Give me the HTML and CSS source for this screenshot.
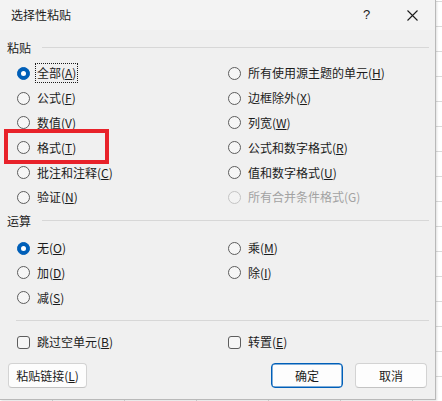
FILE: index.html
```html
<!DOCTYPE html>
<html lang="zh-CN">
<head>
<meta charset="utf-8">
<title>选择性粘贴</title>
<link rel="stylesheet" href="styles.css">
</head>
<body>
<div class="screen">
  <div class="dialog">
    <div class="titlebar">
      <span class="title">选择性粘贴</span>
      <span class="help">?</span>
      <span class="close"><svg width="11" height="11" viewBox="0 0 11 11"><path d="M0.5 0.5 L10.5 10.5 M10.5 0.5 L0.5 10.5" stroke="#1b1b1b" stroke-width="1.1" fill="none"/></svg></span>
    </div>
    <div class="body">
      <div class="section-head"><span class="head-label">粘贴</span><span class="rule"></span></div>
      <div class="opts paste">
        <label class="opt checked"><span class="radio"></span><span class="text focus">全部(<u>A</u>)</span></label>
        <label class="opt"><span class="radio"></span><span class="text">公式(<u>F</u>)</span></label>
        <label class="opt"><span class="radio"></span><span class="text">数值(<u>V</u>)</span></label>
        <label class="opt"><span class="radio"></span><span class="text">格式(<u>T</u>)</span></label>
        <label class="opt"><span class="radio"></span><span class="text">批注和注释(<u>C</u>)</span></label>
        <label class="opt"><span class="radio"></span><span class="text">验证(<u>N</u>)</span></label>
        <label class="opt"><span class="radio"></span><span class="text">所有使用源主题的单元(<u>H</u>)</span></label>
        <label class="opt"><span class="radio"></span><span class="text">边框除外(<u>X</u>)</span></label>
        <label class="opt"><span class="radio"></span><span class="text">列宽(<u>W</u>)</span></label>
        <label class="opt"><span class="radio"></span><span class="text">公式和数字格式(<u>R</u>)</span></label>
        <label class="opt"><span class="radio"></span><span class="text">值和数字格式(<u>U</u>)</span></label>
        <label class="opt disabled"><span class="radio"></span><span class="text">所有合并条件格式(G)</span></label>
      </div>
      <div class="section-head ops-head"><span class="head-label">运算</span><span class="rule"></span></div>
      <div class="opts ops">
        <label class="opt checked"><span class="radio"></span><span class="text">无(<u>O</u>)</span></label>
        <label class="opt"><span class="radio"></span><span class="text">加(<u>D</u>)</span></label>
        <label class="opt"><span class="radio"></span><span class="text">减(<u>S</u>)</span></label>
        <label class="opt"><span class="radio"></span><span class="text">乘(<u>M</u>)</span></label>
        <label class="opt"><span class="radio"></span><span class="text">除(<u>I</u>)</span></label>
      </div>
      <div class="sep"></div>
      <div class="checks">
        <label class="opt"><span class="checkbox"></span><span class="text">跳过空单元(<u>B</u>)</span></label>
        <label class="opt"><span class="checkbox"></span><span class="text">转置(<u>E</u>)</span></label>
      </div>
      <div class="buttons">
        <button class="btn link">粘贴链接(<u>L</u>)</button>
        <span class="spacer"></span>
        <button class="btn primary">确定</button>
        <button class="btn">取消</button>
      </div>
    </div>
  </div>
  <div class="annot"></div>
</div>
</body>
</html>
```
FILE: styles.css
```css
* { box-sizing: border-box; }
html, body { margin: 0; padding: 0; }
body {
  width: 442px;
  height: 401px;
  overflow: hidden;
  font-family: "Microsoft YaHei UI", "Noto Sans CJK SC", "Noto Sans", sans-serif;
  font-size: 12px;
  color: #1b1b1b;
  background-color: #ffffff;
  background-image:
    repeating-linear-gradient(to right, transparent 0 52px, #dadada 52px 53px, transparent 53px 72px),
    repeating-linear-gradient(to bottom, transparent 0 1px, #dadada 1px 2px, transparent 2px 25px);
  background-position: 0 0, 0 0;
}
.screen {
  position: relative;
  width: 442px;
  height: 401px;
}
.dialog {
  width: 436px;
  height: 400px;
  background: #f0f0f0;
  border-right: 1px solid #b9b9b9;
  border-bottom: 1px solid #b9b9b9;
  display: flex;
  flex-direction: column;
  box-shadow: 1px 1px 2px rgba(0,0,0,0.12);
}
.titlebar {
  height: 30px;
  display: flex;
  align-items: center;
  background: #f3f3f3;
  padding-left: 11px;
  flex: none;
}
.title { flex: 1; line-height: 16px; }
.help {
  width: 45px;
  text-align: center;
  font-family: "Liberation Sans", "Noto Sans", sans-serif;
  font-size: 13px;
  line-height: 16px;
}
.close {
  width: 46px;
  display: flex;
  justify-content: center;
  align-items: center;
}
.close svg { display: block; }
.body {
  flex: 1;
  padding: 8px 6px 10px 7px;
  display: flex;
  flex-direction: column;
}
.section-head {
  height: 20px;
  display: flex;
  align-items: center;
  flex: none;
}
.head-label { line-height: 16px; width: 35px; }
.rule {
  flex: 1;
  height: 1px;
  background: #d7d7d7;
  margin-top: -1px;
}
.opts {
  display: grid;
  grid-template-columns: 211px auto;
  grid-auto-flow: column;
  margin-left: 10px;
}
.paste {
  grid-template-rows: repeat(6, 24.8px);
  margin-top: 3px;
}
.ops-head { margin-top: 1px; }
.ops {
  grid-template-rows: repeat(3, 24.8px);
  margin-top: 5px;
}
.opt {
  display: flex;
  align-items: center;
  white-space: nowrap;
}
.radio {
  width: 13px;
  height: 13px;
  border-radius: 50%;
  border: 1px solid #5d5d5d;
  background: #f6f6f6;
  flex: none;
  margin-right: 5px;
  position: relative;
}
.checked .radio {
  border-color: #005fb8;
  background: #005fb8;
}
.checked .radio::after {
  content: "";
  position: absolute;
  left: 3px;
  top: 3px;
  width: 5px;
  height: 5px;
  border-radius: 50%;
  background: #ffffff;
}
.text {
  line-height: 16px;
  padding: 1px;
  border: 1px dotted transparent;
}
.text.focus { border-color: #1b1b1b; padding: 1px 1px 1px 1px; }
u { text-decoration-thickness: 1px; text-underline-offset: 1px; }
.disabled .radio { border-color: #c4c4c4; background: #f3f3f3; }
.disabled .text { color: #a2a2a2; }
.sep {
  height: 1px;
  background: #d7d7d7;
  margin: 10px 0 0 9px;
  flex: none;
}
.checks {
  display: grid;
  grid-template-columns: 211px auto;
  margin: 11px 0 0 10px;
  height: 20px;
}
.checkbox {
  width: 13px;
  height: 13px;
  border: 1px solid #5d5d5d;
  border-radius: 3px;
  background: #f6f6f6;
  flex: none;
  margin-right: 5px;
}
.buttons {
  display: flex;
  margin-top: 11px;
  margin-left: 1px;
  margin-right: 2px;
  gap: 12px;
  height: 25px;
}
.spacer { flex: 1; }
.btn {
  font: inherit;
  color: #1b1b1b;
  background: #fdfdfd;
  border: 1px solid #d3d3d3;
  border-bottom-color: #c3c3c3;
  border-radius: 4px;
  height: 25px;
  width: 72px;
  padding: 0;
  line-height: 16px;
}
.btn.link { width: 79px; }
.btn.primary {
  border: 1px solid #005fb8;
  box-shadow: inset 0 0 0 0.5px #005fb8;
}
.annot {
  position: absolute;
  left: 4px;
  top: 129px;
  width: 105px;
  height: 35px;
  border: 4px solid #e8222a;
}
```
